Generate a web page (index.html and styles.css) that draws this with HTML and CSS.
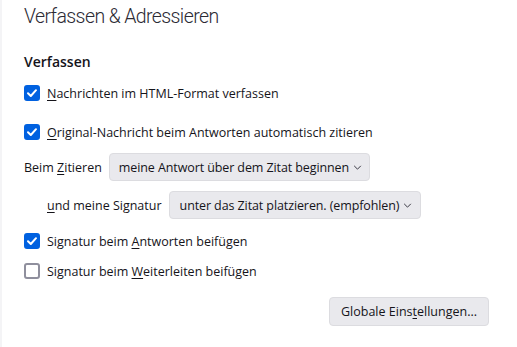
FILE: index.html
```html
<!DOCTYPE html>
<html lang="de">
<head>
<meta charset="utf-8">
<link rel="stylesheet" href="styles.css">
</head>
<body>
<div class="page">
  <h1 class="title">Verfassen &amp; Adressieren</h1>
  <h2 class="section">Verfassen</h2>
  <label class="check row1"><span class="box on"><svg viewBox="0 0 16 16"><path d="M4 8.3 L6.8 11 L12 5.2" /></svg></span><span><u>N</u>achrichten im HTML-Format verfassen</span></label>
  <label class="check row2"><span class="box on"><svg viewBox="0 0 16 16"><path d="M4 8.3 L6.8 11 L12 5.2" /></svg></span><span><u>O</u>riginal-Nachricht beim Antworten automatisch zitieren</span></label>
  <div class="field row3">
    <span class="flabel">Beim <u>Z</u>itieren</span>
    <span class="select">meine Antwort über dem Zitat beginnen<svg class="chev" viewBox="0 0 10 6"><path d="M1 1 L5 5 L9 1" /></svg></span>
  </div>
  <div class="field row4 indent">
    <span class="flabel"><u>u</u>nd meine Signatur</span>
    <span class="select sel2">unter das Zitat platzieren. (empfohlen)<svg class="chev" viewBox="0 0 10 6"><path d="M1 1 L5 5 L9 1" /></svg></span>
  </div>
  <label class="check row5"><span class="box on"><svg viewBox="0 0 16 16"><path d="M4 8.3 L6.8 11 L12 5.2" /></svg></span><span>Signatur beim <u>A</u>ntworten beifügen</span></label>
  <label class="check row6"><span class="box"></span><span>Signatur beim <u>W</u>eiterleiten beifügen</span></label>
  <div class="actions">
    <span class="button">Globale Eins<u>t</u>ellungen...</span>
  </div>
</div>
</body>
</html>
```
FILE: styles.css
```css
html, body {
  margin: 0;
  padding: 0;
  background: #ffffff;
}
body {
  font-family: "Open Sans", "Noto Sans", sans-serif;
  color: #15141a;
  font-size: 12.5px;
  border-left: 2px solid #f4f4f6;
  min-height: 347px;
  box-sizing: border-box;
}
.page {
  padding: 0 0 0 22px;
  width: 467px;
}
.title {
  margin: 0;
  padding-top: 2px;
  font-family: "Roboto", "Lato", sans-serif;
  font-size: 19.5px;
  font-weight: 300;
  letter-spacing: -0.6px;
  line-height: 30px;
  color: #2b2a33;
}
.section {
  margin: 20px 0 0 0;
  font-size: 14px;
  font-weight: 600;
  line-height: 20px;
}
.check {
  display: flex;
  align-items: center;
  gap: 7px;
  height: 20px;
}
.row1 { margin-top: 11px; }
.row2 { margin-top: 19px; }
.row5 { margin-top: 12px; }
.row6 { margin-top: 10px; }
.box {
  width: 16px;
  height: 16px;
  box-sizing: border-box;
  border: 2px solid #8f8f9d;
  border-radius: 3px;
  display: flex;
  align-items: center;
  justify-content: center;
  flex: none;
}
.box.on {
  background: #0061e0;
  border-color: #0061e0;
}
.box svg {
  width: 16px;
  height: 16px;
  flex: none;
}
.box svg path {
  fill: none;
  stroke: #ffffff;
  stroke-width: 2;
  stroke-linecap: round;
  stroke-linejoin: round;
}
.field {
  display: flex;
  align-items: center;
  gap: 7px;
}
.row3 { margin-top: 11px; }
.row4 { margin-top: 10px; }
.indent { padding-left: 23px; }
.select {
  display: flex;
  align-items: center;
  gap: 4px;
  height: 28px;
  box-sizing: border-box;
  padding: 0 7px 0 9px;
  background: #e9e9ed;
  border: 1px solid #dcdce0;
  border-radius: 4px;
  letter-spacing: -0.1px;
}
.sel2 {
  padding: 0 8px 0 10px;
}
.chev {
  width: 9px;
  height: 5px;
}
.chev path {
  fill: none;
  stroke: #3a3944;
  stroke-width: 1.2;
}
.actions {
  display: flex;
  justify-content: flex-end;
  margin-top: 16px;
  padding-right: 2px;
}
.button {
  display: flex;
  align-items: center;
  height: 29px;
  box-sizing: border-box;
  padding: 0 11px;
  background: #e9e9ed;
  border: 1px solid #dcdce0;
  border-radius: 4px;
}
u {
  text-decoration: underline;
  text-underline-offset: 2px;
}
```
